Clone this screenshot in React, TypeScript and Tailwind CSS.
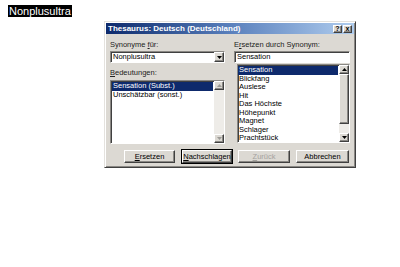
import type { ReactNode } from "react";

const FACE = "bg-[#dcd9d3]";
const RAISED =
  "border border-t-white border-l-white border-b-[#404040] border-r-[#404040] shadow-[inset_-1px_-1px_0_#8a8884]";
const SUNKEN =
  "border border-t-[#8a8884] border-l-[#8a8884] border-b-white border-r-white shadow-[inset_1px_1px_0_#404040]";

function Arrow({ up, dim }: { up?: boolean; dim?: boolean }) {
  return (
    <svg width="5" height="3" viewBox="0 0 5 3">
      <polygon
        points={up ? "2.5,0 5,3 0,3" : "0,0 5,0 2.5,3"}
        fill={dim ? "#9c9a96" : "#000"}
      />
    </svg>
  );
}

function ArrowBtn({ up, dim }: { up?: boolean; dim?: boolean }) {
  return (
    <div className={`flex h-[9px] w-[10px] items-center justify-center ${FACE} ${RAISED}`}>
      <Arrow up={up} dim={dim} />
    </div>
  );
}

function ScrollBar({ thumb }: { thumb?: boolean }) {
  return (
    <div className="flex w-[10px] flex-col bg-[#eeece8]">
      <ArrowBtn up dim={!thumb} />
      {thumb ? (
        <>
          <div className={`h-[50px] ${FACE} ${RAISED}`} />
          <div className="flex-1" />
        </>
      ) : (
        <div className="flex-1" />
      )}
      <ArrowBtn dim={!thumb} />
    </div>
  );
}

function Label({ children }: { children: ReactNode }) {
  return <div className="h-[10px] leading-[10px] text-[#222]">{children}</div>;
}

function Button({
  w,
  focus,
  disabled,
  children,
}: {
  w: string;
  focus?: boolean;
  disabled?: boolean;
  children: ReactNode;
}) {
  return (
    <div
      className={`${w} flex h-[13px] items-center justify-center ${FACE} ${
        focus ? "outline outline-1 outline-black" : ""
      } ${RAISED} ${disabled ? "text-[#a4a29e]" : "text-black"}`}
    >
      {children}
    </div>
  );
}

const RIGHT = [
  "Sensation",
  "Blickfang",
  "Auslese",
  "Hit",
  "Das Höchste",
  "Höhepunkt",
  "Magnet",
  "Schlager",
  "Prachtstück",
];

export default function App() {
  return (
    <div className="h-[267px] w-[400px] overflow-hidden bg-white pt-[5px] font-['Liberation_Sans',Arial,sans-serif] leading-none">
      <div className="ml-[8px] w-fit bg-black px-[1px] text-[11px] leading-[12px] text-white">
        Nonplusultra
      </div>

      <div
        className={`ml-[104px] mt-[4px] w-[252px] p-[1px] text-[7.5px] ${FACE} border border-t-[#e4e2de] border-l-[#e4e2de] border-b-[#404040] border-r-[#404040] shadow-[inset_1px_1px_0_#fff,inset_-1px_-1px_0_#8a8884]`}
      >
        {/* Titelleiste */}
        <div className="flex h-[11px] items-center justify-between bg-gradient-to-r from-[#0e2a6c] via-[#5a80bc] to-[#b0cdee] pl-[2px] pr-[2px]">
          <span className="text-[8px] font-bold leading-[11px] text-white">
            Thesaurus: Deutsch (Deutschland)
          </span>
          <div className="flex gap-[1px]">
            <div className={`flex h-[8px] w-[9px] items-center justify-center text-[7px] font-bold leading-none ${FACE} ${RAISED}`}>
              ?
            </div>
            <div className={`flex h-[8px] w-[9px] items-center justify-center text-[7px] font-bold leading-none ${FACE} ${RAISED}`}>
              x
            </div>
          </div>
        </div>

        <div className="flex gap-[9px] px-[4px] pt-[6px]">
          {/* links */}
          <div className="flex w-[115px] flex-col">
            <Label>
              Synonyme <u>f</u>ür:
            </Label>
            <div className={`mt-[1px] flex h-[12px] bg-white ${SUNKEN}`}>
              <div className="flex-1 pl-[2px] leading-[10px]">Nonplusultra</div>
              <div className={`flex w-[10px] items-center justify-center ${FACE} ${RAISED}`}>
                <Arrow />
              </div>
            </div>
            <div className="mt-[5px]">
              <Label>
                <u>B</u>edeutungen:
              </Label>
            </div>
            <div className={`mt-[2px] flex h-[64px] bg-white ${SUNKEN}`}>
              <div className="flex-1 pl-[1px] pt-[1px] leading-[8.5px]">
                <div className="mr-[1px] bg-[#0e2a6c] pl-[1px] text-white">Sensation (Subst.)</div>
                <div className="pl-[1px]">Unschätzbar (sonst.)</div>
              </div>
              <ScrollBar />
            </div>
          </div>

          {/* rechts */}
          <div className="flex w-[116px] flex-col">
            <Label>
              E<u>r</u>setzen durch Synonym:
            </Label>
            <div className={`mt-[1px] h-[12px] bg-white pl-[2px] leading-[10px] ${SUNKEN}`}>
              Sensation
            </div>
            <div className={`ml-[3px] mt-[1px] flex h-[79px] bg-white ${SUNKEN}`}>
              <div className="flex-1 pt-[1px] leading-[8.5px]">
                {RIGHT.map((s, i) => (
                  <div
                    key={s}
                    className={i === 0 ? "mr-[1px] bg-[#0e2a6c] pl-[1px] text-white" : "pl-[1px]"}
                  >
                    {s}
                  </div>
                ))}
              </div>
              <ScrollBar thumb />
            </div>
          </div>
        </div>

        <div className="flex pb-[3px] pl-[18px] pt-[6px]">
          <Button w="w-[51px]">
            <u>E</u>rsetzen
          </Button>
          <div className="ml-[7px]">
            <Button w="w-[50px]" focus>
              <u>N</u>achschlagen
            </Button>
          </div>
          <div className="ml-[6px]">
            <Button w="w-[52px]" disabled>
              <u>Z</u>urück
            </Button>
          </div>
          <div className="ml-[6px]">
            <Button w="w-[53px]">Abbrechen</Button>
          </div>
        </div>
      </div>
    </div>
  );
}
